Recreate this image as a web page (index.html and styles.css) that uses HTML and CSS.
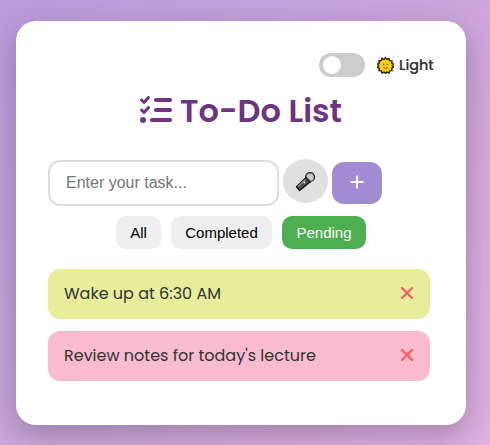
FILE: index.html
```html
<!DOCTYPE html>
<html lang="en">
<head>
<meta charset="utf-8">
<title>To-Do List</title>
<link rel="stylesheet" href="styles.css">
</head>
<body>
<main class="card">
  <div class="theme">
    <span class="switch"></span>
    <svg class="sun" viewBox="0 0 18 18"><path d="M9 .7l1.500 1.800 2.200-1 .7 2.300 2.500.2-.3 2.400 2.100 1.200L16.200 9l1.500 1.800-2.100 1.300.3 2.400-2.500.2-.7 2.300-2.200-1-1.500 1.500-1.500-1.500-2.200 1-.7-2.300-2.500-.2.3-2.400L.3 10.800 1.800 9 .3 7.500l2.100-1.200-.3-2.500 2.500-.1.7-2.400L7.500 2.500z" fill="#ffc400" stroke="#2c2206" stroke-width="1.500"/><circle cx="9" cy="9" r="5.500" fill="#ffd200"/><circle cx="7" cy="7.800" r=".9" fill="#59430e"/><circle cx="11" cy="7.800" r=".9" fill="#59430e"/><path d="M6.400 10.800q2.600 2.600 5.200 0" fill="none" stroke="#59430e"/></svg>
    <span class="mode">Light</span>
  </div>
  <h1 class="title">
    <svg class="list" viewBox="0 0 512 512" fill="currentColor"><path d="M152.1 38.2c9.900 8.900 10.700 24 1.800 33.900l-72 80c-4.400 4.900-10.600 7.800-17.200 7.900s-12.900-2.400-17.600-7L7 113C-2.300 103.600-2.300 88.400 7 79s24.600-9.400 33.900 0l22.100 22.100 55.100-61.200c8.900-9.900 24-10.700 33.900-1.800zm0 160c9.900 8.900 10.700 24 1.800 33.900l-72 80c-4.400 4.900-10.600 7.800-17.200 7.900s-12.900-2.400-17.600-7L7 273c-9.400-9.400-9.400-24.600 0-33.900s24.600-9.400 33.900 0l22.100 22.100 55.100-61.200c8.900-9.900 24-10.700 33.900-1.800zM224 96c0-17.700 14.300-32 32-32H480c17.700 0 32 14.300 32 32s-14.300 32-32 32H256c-17.700 0-32-14.300-32-32zm0 160c0-17.700 14.300-32 32-32H480c17.700 0 32 14.300 32 32s-14.300 32-32 32H256c-17.700 0-32-14.300-32-32zM160 416c0-17.700 14.300-32 32-32H480c17.700 0 32 14.300 32 32s-14.300 32-32 32H192c-17.700 0-32-14.300-32-32zM48 368a48 48 0 1 1 0 96 48 48 0 1 1 0-96z"/></svg>
    <span>To-Do List</span>
  </h1>
  <div class="entry">
    <input class="task-input" type="text" placeholder="Enter your task...">
    <button class="mic" aria-label="Voice input"><svg viewBox="0 0 22 22"><path d="M12 6.500L1.500 16.500l3.300 4L16.500 11z" fill="#4c4c4c" stroke="#111" stroke-width="1.300" stroke-linejoin="round"/><path d="M11.500 8.500L3 16.500" stroke="#8c8c8c" stroke-width="1.500"/><circle cx="15.800" cy="6.300" r="4.700" fill="#bdbdbd" stroke="#1b1b1b" stroke-width="1.300"/><path d="M11.300 6.500l5 5.200" stroke="#222" stroke-width="1.500"/><path d="M14 4.500l4 4M17.500 4l-4 4" stroke="#ddd"/><circle cx="9.800" cy="12" r="1" fill="#ddd"/></svg></button>
    <button class="add" aria-label="Add task"><svg viewBox="0 0 14 14"><path d="M7 .5v13M.5 7h13" stroke="#fff" stroke-width="1.900"/></svg></button>
  </div>
  <div class="filters">
    <button class="filter all">All</button>
    <button class="filter completed">Completed</button>
    <button class="filter pending">Pending</button>
  </div>
  <ul class="tasks">
    <li class="task lime"><span>Wake up at 6:30 AM</span><svg class="x" viewBox="0 0 14 14"><path d="M2 2l10 10M12 2L2 12"/></svg></li>
    <li class="task pink"><span>Review notes for today's lecture</span><svg class="x" viewBox="0 0 14 14"><path d="M2 2l10 10M12 2L2 12"/></svg></li>
  </ul>
</main>
</body>
</html>
```
FILE: styles.css
```css
* { box-sizing: border-box; }
body {
  margin: 0;
  height: 445px;
  padding: 21px 24px 20px 16px;
  overflow: hidden;
  background: linear-gradient(135deg, #b99bdb, #dfb0e0);
  font-family: Poppins, Inter, sans-serif;
  color: #333;
}
.card {
  width: 450px;
  height: 404px;
  padding: 32px;
  border-radius: 20px;
  background: #fff;
  box-shadow: 0 10px 30px rgba(0, 0, 0, .25);
}
.theme { display: flex; align-items: center; justify-content: flex-end; height: 24px; }
.switch { width: 46px; height: 24px; border-radius: 12px; background: #ccc; padding: 3px 4px; margin-right: 12px; }
.switch::before { content: ""; display: block; width: 18px; height: 18px; border-radius: 50%; background: #fff; }
.sun { width: 17px; height: 17px; margin-right: 5px; }
.mode { width: 35px; font-size: 14.4px; font-weight: 500; white-space: nowrap; -webkit-text-stroke: .2px #333; }
.title {
  display: flex;
  align-items: center;
  gap: 8px;
  height: 48px;
  margin: 10px 0 25px 92px;
  font-size: 32px;
  font-weight: 600;
  color: #6c3483;
  white-space: nowrap;
}
.list { width: 32px; height: 32px; flex: none; margin-bottom: 2px; }
.entry { display: flex; align-items: center; gap: 4px; height: 46px; }
.task-input {
  width: 231px;
  height: 46px;
  padding: 0 16px;
  border: 2px solid #ddd;
  border-radius: 12px;
  font: 16px "Liberation Sans", sans-serif;
}
.task-input::placeholder { color: #757575; }
button { border: 0; padding: 0; }
.mic { width: 45px; height: 44px; margin-bottom: 4px; border-radius: 50%; background: #e0e0e0; display: grid; place-items: center; }
.mic svg { width: 21px; height: 21px; }
.add { width: 50px; height: 42px; border-radius: 12px; background: #a18cd1; display: grid; place-items: center; }
.add svg { width: 14px; height: 14px; margin-bottom: 2px; }
.filters { display: flex; gap: 10px; margin: 10px 0 20px 68px; }
.filter { height: 33px; border-radius: 10px; background: #eee; color: #000; font: 15px "Liberation Sans", sans-serif; }
.all { width: 45px; }
.completed { width: 101px; }
.pending { width: 84px; background: #4caf50; color: #fff; }
.tasks { list-style: none; margin: 0; padding: 0; width: 382px; display: grid; gap: 12px; }
.task { display: flex; align-items: center; justify-content: space-between; height: 50px; padding: 0 16px 2px; border-radius: 12px; font-size: 16px; white-space: nowrap; }
.lime { background: #e6ee9c; }
.pink { background: #f8bbd0; }
.x { width: 14px; height: 14px; fill: none; stroke: #ff5c5c; stroke-width: 2.3; stroke-linecap: round; }
```
